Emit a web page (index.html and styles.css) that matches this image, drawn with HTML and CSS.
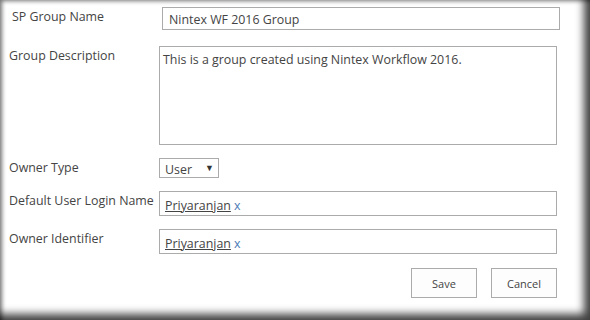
FILE: index.html
```html
<!DOCTYPE html>
<html lang="en">
<head>
    <meta charset="UTF-8">
    <title>Create SP Group</title>
    <link rel="stylesheet" href="styles.css">
</head>
<body>
    <div class="dialog">
        <div class="form-row first">
            <label class="field-label">SP Group Name</label>
            <div class="text-box name-box">Nintex WF 2016 Group</div>
        </div>
        <div class="form-row">
            <label class="field-label">Group Description</label>
            <div class="text-area">This is a group created using Nintex Workflow 2016.</div>
        </div>
        <div class="form-row">
            <label class="field-label">Owner Type</label>
            <div class="drop-down">
                <span>User</span>
                <span class="arrow">&#9660;</span>
            </div>
        </div>
        <div class="form-row">
            <label class="field-label">Default User Login Name</label>
            <div class="text-box people-box">
                <a class="person" href="#">Priyaranjan</a> <span class="remove">x</span>
            </div>
        </div>
        <div class="form-row">
            <label class="field-label">Owner Identifier</label>
            <div class="text-box people-box">
                <a class="person" href="#">Priyaranjan</a> <span class="remove">x</span>
            </div>
        </div>
        <div class="button-row">
            <button>Save</button>
            <button>Cancel</button>
        </div>
    </div>
</body>
</html>
```

FILE: styles.css
```css
html, body {
    margin: 0;
    height: 100%;
}

body {
    background: #fff;
    font-family: 'Open Sans', 'Segoe UI', sans-serif;
    font-size: 12.4px;
    color: #444;
    box-shadow: inset 4px 3px 4px -2px rgba(0, 0, 0, 0.55),
                inset -9px -9px 8px -3px rgba(0, 0, 0, 0.75);
    box-sizing: border-box;
    overflow: hidden;
}

.dialog {
    padding: 7px 33px 0 9px;
}

.form-row {
    display: flex;
    align-items: flex-start;
    margin-bottom: 13px;
}

.form-row.first {
    padding-left: 3px;
    margin-bottom: 16px;
}

.field-label {
    width: 150px;
    flex: none;
    line-height: 16px;
    padding-top: 2px;
    white-space: nowrap;
}

.text-box,
.text-area,
.drop-down {
    border: 1px solid #ababab;
    box-sizing: border-box;
    background: #fff;
}

.text-box {
    flex: 1;
    padding: 1px 6px 0;
    display: flex;
    align-items: center;
}

.name-box {
    height: 23px;
    margin-right: -3px;
}

.people-box {
    height: 25px;
    padding: 3px 5px 0;
}

.text-area {
    flex: 1;
    height: 99px;
    padding: 5px 3px;
    line-height: 16px;
}

.drop-down {
    width: 60px;
    height: 20px;
    padding: 2px 5px 0;
    display: flex;
    align-items: center;
    justify-content: space-between;
}

.arrow {
    font-size: 9px;
    color: #333;
    margin-top: -4px;
    margin-right: -1px;
}

.person {
    color: #444;
    text-decoration: underline;
    margin-right: 3px;
}

.remove {
    color: #4a7ab5;
}

.button-row {
    display: flex;
    justify-content: flex-end;
    gap: 14px;
    margin-top: 14px;
}

button {
    width: 66px;
    height: 30px;
    background: #fdfdfd;
    border: 1px solid #ababab;
    font-family: 'Open Sans', 'Segoe UI', sans-serif;
    font-size: 11px;
    color: #444;
    padding: 0;
}
```
